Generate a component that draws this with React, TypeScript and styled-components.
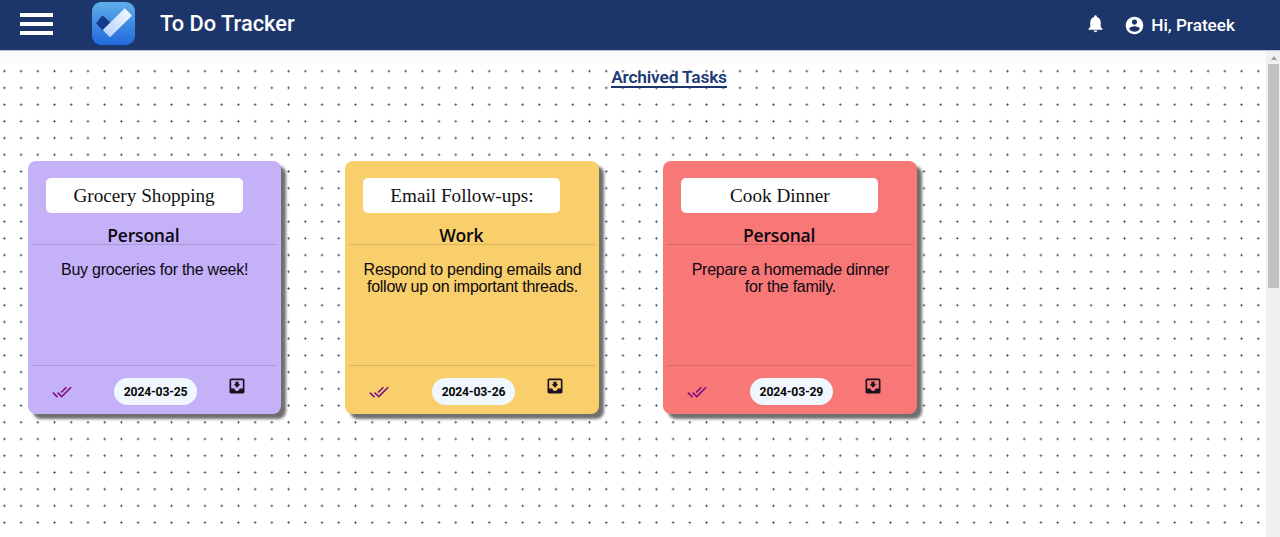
import React from "react";
import styled, { createGlobalStyle } from "styled-components";

const GlobalStyle = createGlobalStyle`
  * { box-sizing: border-box; }
  body { margin: 0; overflow: hidden; background: #fff; font-family: Roboto, sans-serif; }
`;

const Page = styled.div`
  display: flex;
  flex-direction: column;
  width: 1280px;
  height: 537px;
`;

const Header = styled.header`
  flex: none;
  display: flex;
  align-items: center;
  height: 51px;
  padding: 0 45px 3px 20px;
  background: #1c366b;
  border-bottom: 1px solid #b9c4de;
  color: #fff;
`;

const MenuButton = styled.button`
  display: flex;
  flex-direction: column;
  justify-content: space-between;
  width: 33px;
  height: 22px;
  padding: 0;
  border: 0;
  background: none;
`;

const MenuBar = styled.span`
  height: 4px;
  border-radius: 0.5px;
  background: #fff;
`;

const Logo = styled.svg`
  display: block;
  width: 43px;
  height: 43px;
  margin-left: 39px;
`;

const Brand = styled.h1`
  margin: 0 auto 0 25px;
  font-size: 21.8px;
  font-weight: 500;
  line-height: 26px;
  white-space: nowrap;
`;

const Icon = styled.svg<{ $size: number; $color?: string }>`
  display: block;
  flex: none;
  width: ${(p) => p.$size}px;
  height: ${(p) => p.$size}px;
  fill: ${(p) => p.$color ?? "#fff"};
`;

const User = styled.div`
  display: flex;
  align-items: center;
  gap: 6px;
  margin: 3px 0 0 18px;
  font-size: 17.2px;
  font-weight: 500;
  line-height: 20px;
  white-space: nowrap;
`;

const Body = styled.div`
  flex: 1;
  display: flex;
  min-height: 0;
`;

const Content = styled.main`
  flex: 1;
  display: flex;
  flex-direction: column;
  border-top: 12px solid #fafafc;
  background-color: #fff;
  background-image: radial-gradient(circle at center, #1f3a55 0.8px, transparent 1.25px);
  background-size: 16.72px 16.73px;
  background-position: -4px -0.2px;
`;

const Heading = styled.h2`
  align-self: center;
  height: 21px;
  margin: 4px 0 0 72px;
  border-bottom: 2px solid #1c366b;
  color: #1c3a75;
  font-size: 17.4px;
  font-weight: 600;
  letter-spacing: -0.2px;
  line-height: 21px;
  white-space: nowrap;
`;

const Cards = styled.section`
  display: flex;
  gap: 64.4px;
  margin: 73px 0 0 27.6px;
`;

const Card = styled.article<{ $color: string }>`
  display: flex;
  flex-direction: column;
  width: 253.5px;
  height: 253px;
  padding: 17px 4px 0;
  border-radius: 8px;
  background: ${(p) => p.$color};
  box-shadow: 5px 5px 3px #6f6f6f;
  color: #0c0812;
`;

const Title = styled.h3`
  width: 197px;
  height: 35px;
  margin: 0 0 0 14px;
  border-radius: 5px;
  background: #fff;
  color: #111;
  font: 400 19.2px/35px "Liberation Serif", serif;
  text-align: center;
`;

const Category = styled.div`
  height: 32px;
  padding: 10px 22px 0 0;
  border-bottom: 1px solid rgba(0, 0, 0, 0.13);
  font: 600 17.5px/24px "Open Sans", sans-serif;
  letter-spacing: -0.2px;
  text-align: center;
`;

const Description = styled.p`
  width: 226px;
  height: 120px;
  margin: 0 0 0 10px;
  padding-top: 16px;
  font: 400 16px/17px "Liberation Sans", sans-serif;
  letter-spacing: -0.25px;
  text-align: center;
  white-space: nowrap;
`;

const Footer = styled.footer`
  display: flex;
  align-items: flex-start;
  padding: 12px 0 0 20px;
  border-top: 1px solid rgba(0, 0, 0, 0.13);
`;

const DateChip = styled.time`
  width: 83px;
  height: 27px;
  margin: 0 30px 0 42.5px;
  border-radius: 14px;
  background: #f0f7ff;
  color: #080808;
  font-size: 12.2px;
  font-weight: 700;
  letter-spacing: -0.2px;
  line-height: 28px;
  text-align: center;
`;

const DoneIcon = styled(Icon)`
  margin-top: 4px;
`;

const ArchiveIcon = styled(Icon)`
  margin-top: -2px;
`;

const Scrollbar = styled.aside`
  width: 14px;
  padding: 5px 1px 0 2px;
  background: #f0f0f0;
`;

const ScrollArrow = styled.div`
  width: 0;
  margin: 0 auto;
  border: 3px solid transparent;
  border-top: 0;
  border-bottom: 4px solid #a0a0a0;
`;

const ScrollThumb = styled.div`
  height: 224px;
  margin-top: 4px;
  background: #c1c1c1;
`;

const tasks = [
  { title: "Grocery Shopping", category: "Personal", lines: ["Buy groceries for the week!"], date: "2024-03-25", color: "#c4b1f8" },
  { title: "Email Follow-ups:", category: "Work", lines: ["Respond to pending emails and", "follow up on important threads."], date: "2024-03-26", color: "#f8cf6a" },
  { title: "Cook Dinner", category: "Personal", lines: ["Prepare a homemade dinner", "for the family."], date: "2024-03-29", color: "#f87777" },
];

export default function App() {
  return (
    <Page>
      <GlobalStyle />
      <Header>
        <MenuButton aria-label="Menu">
          <MenuBar />
          <MenuBar />
          <MenuBar />
        </MenuButton>
        <Logo viewBox="0 0 43 43">
          <defs>
            <linearGradient id="tile" x1="0" y1="0" x2="0" y2="1">
              <stop offset="0" stopColor="#5faee9" />
              <stop offset="1" stopColor="#2269dc" />
            </linearGradient>
            <linearGradient id="tick" x1="1" y1="0" x2="0" y2="1">
              <stop offset="0" stopColor="#f4f8fe" />
              <stop offset="1" stopColor="#b5d1f8" />
            </linearGradient>
          </defs>
          <rect width="43" height="43" rx="9" fill="url(#tile)" />
          <path d="M4.6 21.4 9.7 14.8Q10.7 13.8 11.7 14.8L18.2 20.8 11.3 28.5Z" fill="#153a8c" stroke="#153a8c" strokeWidth="1" strokeLinejoin="round" />
          <path d="M11.8 28 32.8 7.4 38.8 13.6 18 34.2Z" fill="url(#tick)" stroke="url(#tick)" strokeWidth="1.6" strokeLinejoin="round" />
        </Logo>
        <Brand>To Do Tracker</Brand>
        <Icon $size={21} viewBox="0 0 24 24">
          <path d="M12 22c1.1 0 2-.9 2-2h-4c0 1.1.89 2 2 2zm6-6v-5c0-3.07-1.64-5.64-4.5-6.32V4c0-.83-.67-1.5-1.5-1.5s-1.5.67-1.5 1.5v.68C7.63 5.36 6 7.92 6 11v5l-2 2v1h16v-1l-2-2z" />
        </Icon>
        <User>
          <Icon $size={21} viewBox="0 0 24 24">
            <path d="M12 2C6.48 2 2 6.48 2 12s4.48 10 10 10 10-4.48 10-10S17.52 2 12 2zm0 3c1.66 0 3 1.34 3 3s-1.34 3-3 3-3-1.34-3-3 1.34-3 3-3zm0 14.2c-2.5 0-4.71-1.28-6-3.22.03-1.99 4-3.08 6-3.08 1.99 0 5.97 1.09 6 3.08-1.29 1.94-3.5 3.22-6 3.22z" />
          </Icon>
          Hi, Prateek
        </User>
      </Header>
      <Body>
        <Content>
          <Heading>Archived Tasks</Heading>
          <Cards>
            {tasks.map((task) => (
              <Card key={task.date} $color={task.color}>
                <Title>{task.title}</Title>
                <Category>{task.category}</Category>
                <Description>
                  {task.lines.map((line, i) => (
                    <React.Fragment key={line}>
                      {i > 0 && <br />}
                      {line}
                    </React.Fragment>
                  ))}
                </Description>
                <Footer>
                  <DoneIcon $size={20} $color="#7b0f86" viewBox="0 0 24 24">
                    <path d="m18 7-1.41-1.41-6.34 6.34 1.41 1.41L18 7zm4.24-1.41L11.66 16.17 7.48 12l-1.41 1.41L11.66 19l12-12-1.42-1.41zM.41 13.41 6 19l1.41-1.41L1.83 12 .41 13.41z" />
                  </DoneIcon>
                  <DateChip>{task.date}</DateChip>
                  <ArchiveIcon $size={20} $color="#1d1020" viewBox="0 0 24 24">
                    <path d="M19 3H4.99c-1.11 0-1.98.9-1.98 2L3 19c0 1.1.88 2 1.99 2H19c1.1 0 2-.9 2-2V5c0-1.1-.9-2-2-2zm0 12h-4c0 1.66-1.35 3-3 3s-3-1.34-3-3H4.99V5H19v10zm-3-5h-2V7h-4v3H8l4 4 4-4z" />
                  </ArchiveIcon>
                </Footer>
              </Card>
            ))}
          </Cards>
        </Content>
        <Scrollbar>
          <ScrollArrow />
          <ScrollThumb />
        </Scrollbar>
      </Body>
    </Page>
  );
}
